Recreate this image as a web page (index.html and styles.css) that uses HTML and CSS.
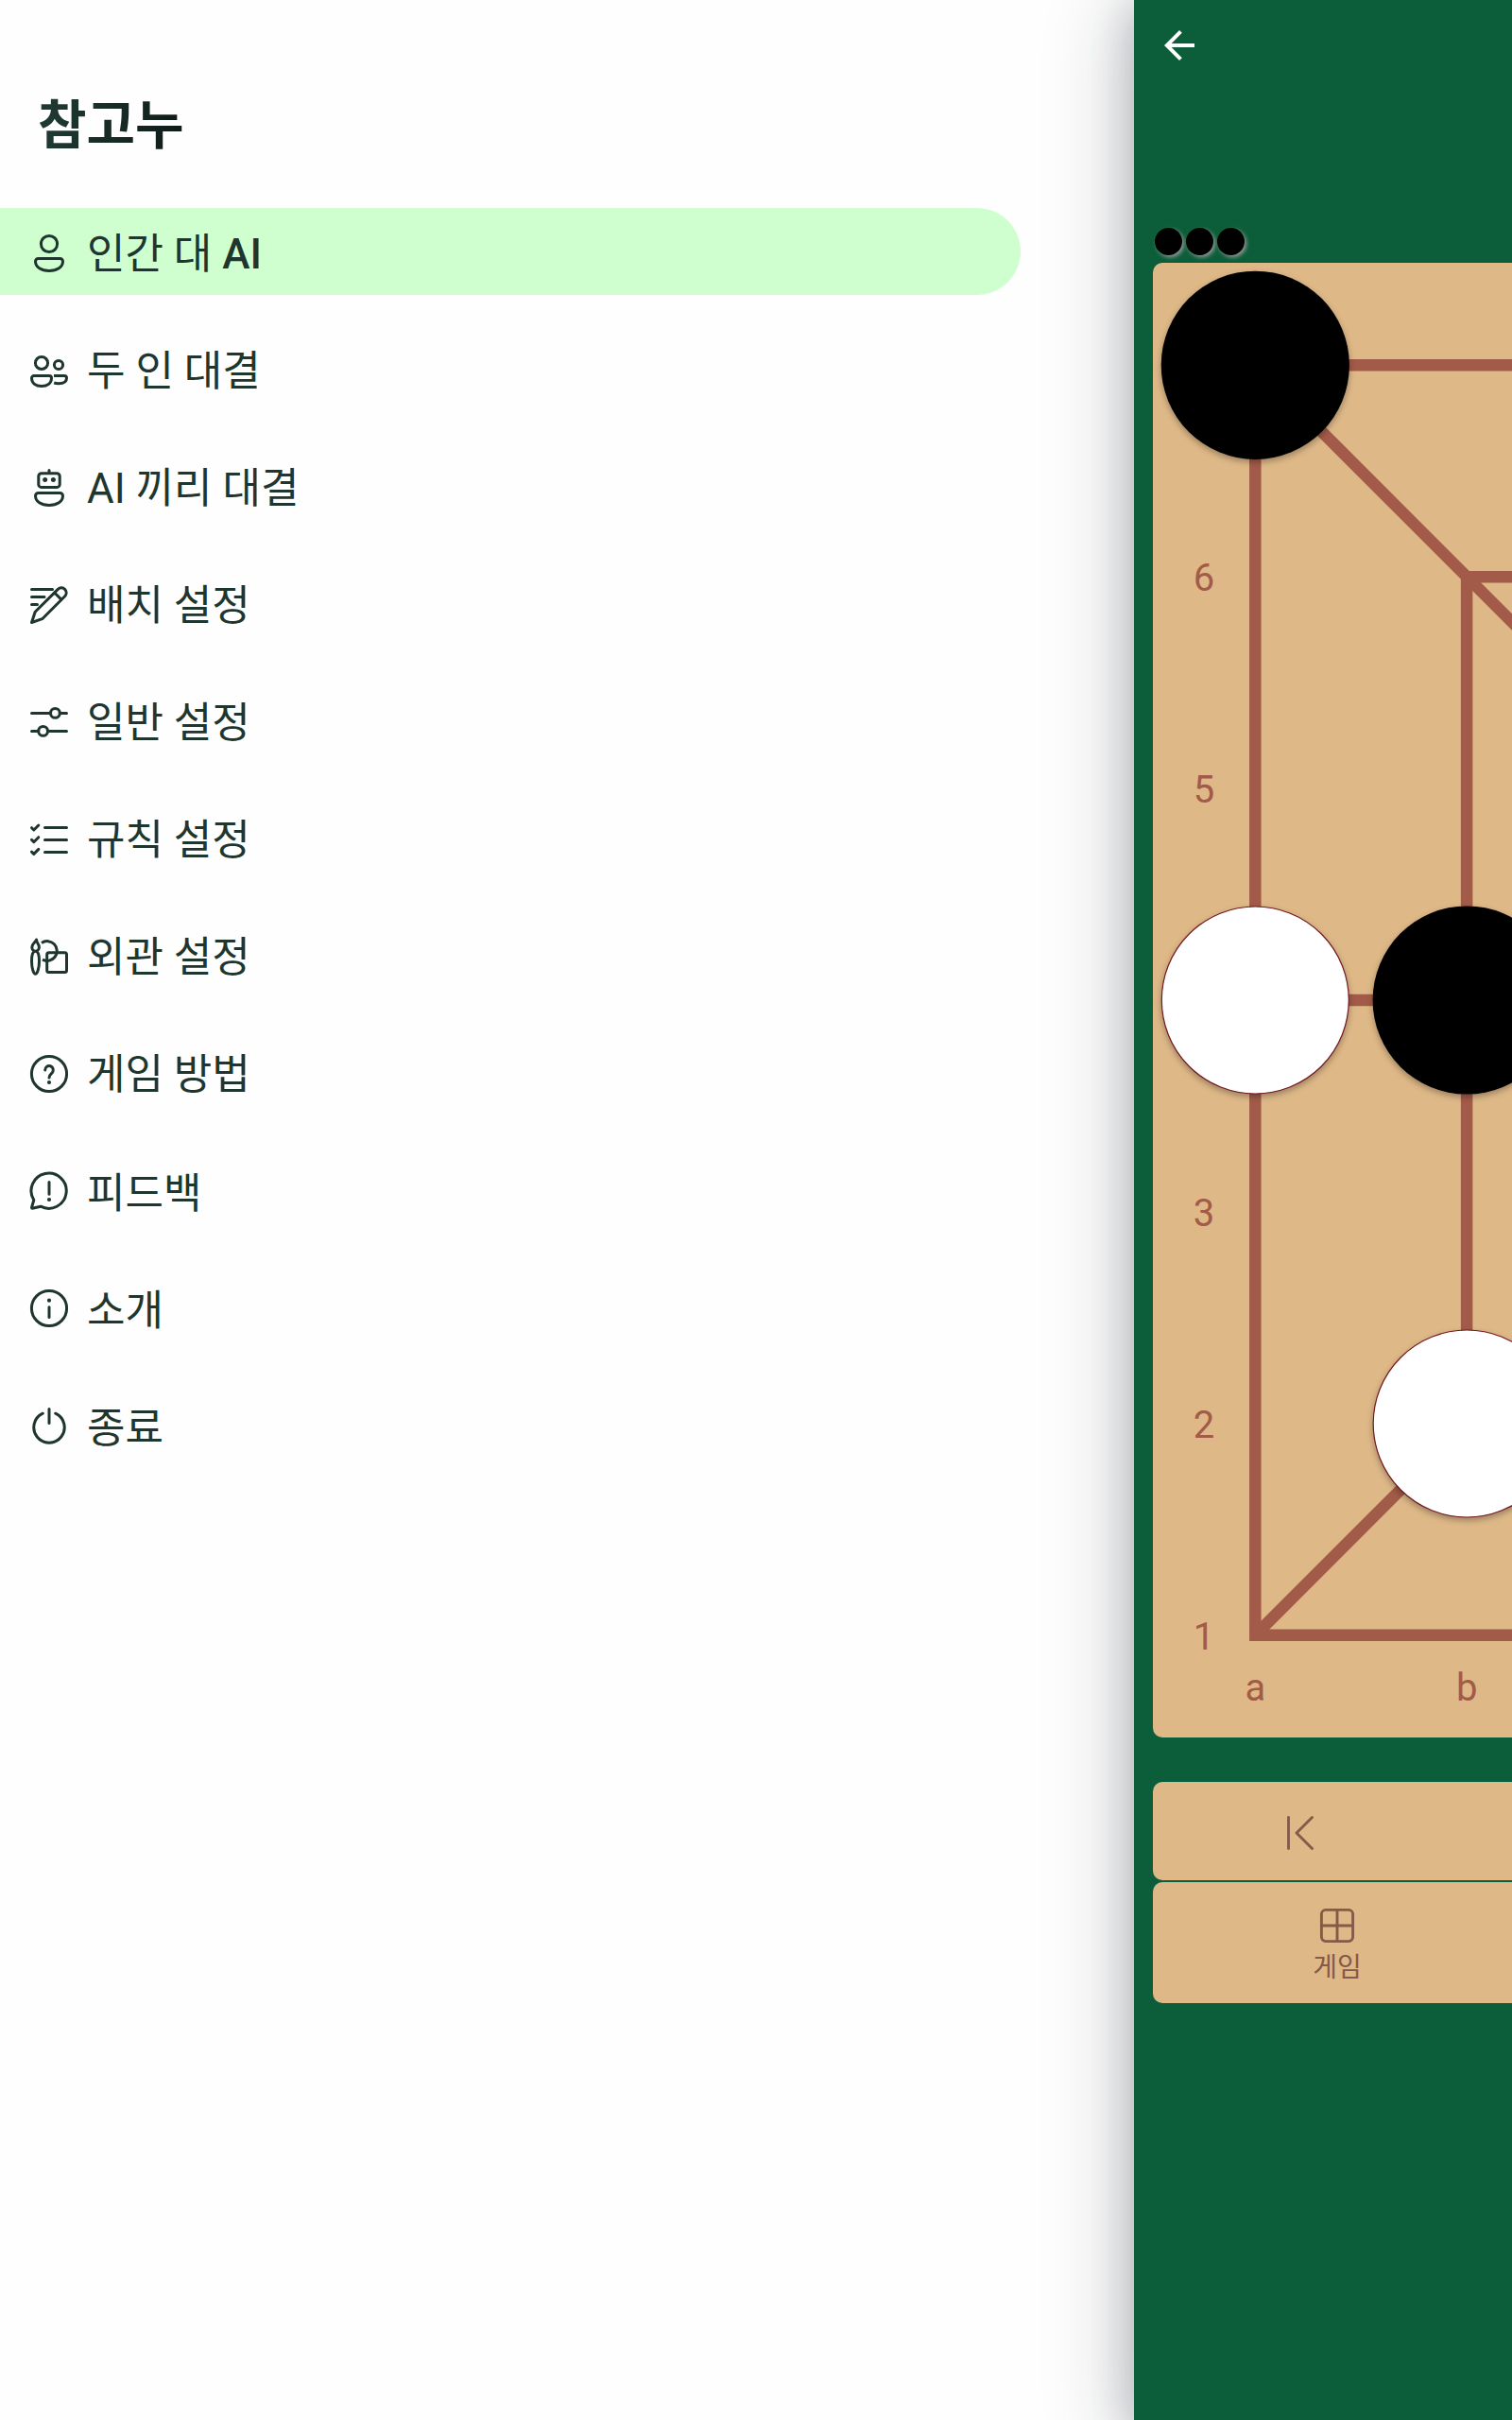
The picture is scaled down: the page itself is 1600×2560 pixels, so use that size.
FILE: index.html
```html
<!DOCTYPE html>
<html lang="ko">
<head>
<meta charset="utf-8">
<title>참고누</title>
<link rel="stylesheet" href="styles.css">
</head>
<body>
<div class="app">
  <nav class="drawer">
    <h1 class="drawer-title"><span class="title-text">참고누</span></h1>
    <ul class="menu">
      <li class="menu-item active">
        <svg class="icon" viewBox="0 0 48 48"><circle cx="24" cy="14" r="8.6"/><path d="M12.5 29.5h23a3 3 0 0 1 3 3c0 6.3-6.2 10-14.5 10s-14.5-3.700-14.500-10a3 3 0 0 1 3-3z"/></svg>
        <span class="label">인간 대 <b class="latin">AI</b></span>
      </li>
      <li class="menu-item">
        <svg class="icon" viewBox="0 0 48 48"><circle cx="16" cy="16" r="6.600"/><circle cx="34" cy="18" r="4.600"/><path d="M8 29.500h16a2.500 2.500 0 0 1 2.500 2.500c0 5.500-4.500 8.500-10.500 8.500s-10.500-3-10.500-8.500a2.500 2.500 0 0 1 2.500-2.500z"/><path class="butt" d="M29 29.500h11a2.500 2.500 0 0 1 2.500 2.500c0 4-3.800 5.700-8.500 5.700q-2.700 0-4.800-.7"/></svg>
        <span class="label">두 인 대결</span>
      </li>
      <li class="menu-item">
        <svg class="icon" viewBox="0 0 48 48"><path d="M24 5.500v3"/><rect x="12.800" y="8.800" width="22.400" height="14.600" rx="3"/><circle class="dot" cx="19.700" cy="15.400" r="2.500"/><circle class="dot" cx="28.400" cy="15.400" r="2.500"/><path d="M12.500 29.500h23a3 3 0 0 1 3 3c0 6.300-6.200 10-14.500 10s-14.500-3.700-14.500-10a3 3 0 0 1 3-3z"/></svg>
        <span class="label">AI 끼리 대결</span>
      </li>
      <li class="menu-item">
        <svg class="icon" viewBox="0 0 48 48"><path d="M5.500 7.400h22M5.500 15.400h13.500M5.500 23.400h6M5.500 42.500 9.200 31.300 33.500 7.100a5.250 5.250 0 0 1 7.400 7.400L16.700 38.700zM29.700 11l7.400 7.400"/></svg>
        <span class="label">배치 설정</span>
      </li>
      <li class="menu-item">
        <svg class="icon" viewBox="0 0 48 48"><circle cx="30.400" cy="14.400" r="4.900"/><circle cx="17.600" cy="33.400" r="4.900"/><path d="M5.500 14.400h20M35.300 14.400h7.200M5.500 33.400h7.200M22.500 33.400h20"/></svg>
        <span class="label">일반 설정</span>
      </li>
      <li class="menu-item">
        <svg class="icon" viewBox="0 0 48 48"><path d="M5.500 11.700 7.800 14l5-5M5.500 24.400l2.300 2.300 5-5M5.500 37.100l2.300 2.300 5-5M19.500 11.400h23M19.500 24.400h23M19.500 37.400h23"/></svg>
        <span class="label">규칙 설정</span>
      </li>
      <li class="menu-item">
        <svg class="icon" viewBox="0 0 48 48"><path d="M10.600 6c-1 2.800-4.800 4.200-4.800 8 0 2.200 1.600 4.200 3.700 4.200s3.900-1.800 3.900-4.200c0-3.600-3-4.500-2.800-8zM9.500 18.200c-2.700 0-4 4-4 10.500 0 7.500 2 13.500 4 13.500s4-6 4-13.500c0-6.500-1.300-10.500-4-10.500z"/><path class="butt" d="M16 9.400a10.400 10.400 0 1 1 1 17.800"/><rect x="21.700" y="19.800" width="20.800" height="20.600" rx="2"/></svg>
        <span class="label">외관 설정</span>
      </li>
      <li class="menu-item">
        <svg class="icon" viewBox="0 0 48 48"><circle cx="24" cy="24" r="18.600"/><path d="M19.700 20a4.300 4.400 0 1 1 7.600 2.700c-1.700 1.700-3.300 2.600-3.300 5.300"/><circle class="dot" cx="24" cy="33" r="2.100"/></svg>
        <span class="label">게임 방법</span>
      </li>
      <li class="menu-item">
        <svg class="icon" viewBox="0 0 48 48"><path d="M7.800 33.500a18.600 18.600 0 1 1 7.200 6.700L6.300 42.300a.8.8 0 0 1-.8-.8zM24 14.500v12.700"/><circle class="dot" cx="24" cy="33" r="2.100"/></svg>
        <span class="label single">피드백</span>
      </li>
      <li class="menu-item">
        <svg class="icon" viewBox="0 0 48 48"><circle cx="24" cy="24" r="18.600"/><path d="M24 22.700v10.700"/><circle class="dot" cx="24" cy="15.700" r="2.100"/></svg>
        <span class="label single">소개</span>
      </li>
      <li class="menu-item">
        <svg class="icon" viewBox="0 0 48 48"><path d="M17.300 11.200a16.200 16.200 0 1 0 13.400 0M24 6.500v15"/></svg>
        <span class="label single">종료</span>
      </li>
    </ul>
  </nav>

  <main class="game">
    <header class="topbar">
      <svg class="back" viewBox="0 0 24 24"><path d="M20 11H7.830l5.590-5.590L12 4l-8 8 8 8 1.410-1.410L7.830 13H20z"/></svg>
    </header>
    <div class="in-hand"><i></i><i></i><i></i></div>
    <svg class="board" viewBox="0 0 380 1560">
      <g class="lines">
        <path d="M400 108.300H108.300V1451.700H400"/>
        <path d="M400 332.200H332.100V1228"/>
        <path d="M108 780H332M108 108 400 400M108 1452 332 1228"/>
      </g>
      <g class="coords">
        <text x="54" y="346.700">6</text>
        <text x="54" y="570.700">5</text>
        <text x="54" y="1018.700">3</text>
        <text x="54" y="1242.700">2</text>
        <text x="54" y="1466.700">1</text>
        <text x="108.300" y="1520.700">a</text>
        <text x="332.300" y="1520.700">b</text>
      </g>
      <g class="pieces">
        <circle class="black" cx="108.300" cy="108.300" r="99.600"/>
        <circle class="white" cx="108.300" cy="780" r="99"/>
        <circle class="black" cx="332.200" cy="780" r="99.600"/>
        <circle class="white" cx="332.200" cy="1228" r="99"/>
      </g>
    </svg>
    <div class="toolbar history">
      <svg class="tool-icon" viewBox="0 0 48 48"><path d="M11.500 7.500v33M36.500 7.500 20 24l16.500 16.500"/></svg>
    </div>
    <div class="toolbar actions">
      <svg class="tool-icon" viewBox="0 0 48 48"><rect x="7.400" y="7.400" width="33.200" height="33.200" rx="4.500"/><path d="M24 7.500v33M7.500 24h33"/></svg>
      <span class="tool-label">게임</span>
    </div>
  </main>
</div>
</body>
</html>
```
FILE: styles.css
```css
* {
  box-sizing: border-box;
}

body {
  margin: 0;
  font-family: Roboto, "Noto Sans CJK KR", sans-serif;
  color: #1e362e;
}

.app {
  display: grid;
  grid-template-columns: 1200px 400px;
  width: 1600px;
  height: 2560px;
  overflow: hidden;
  background: #fefefe;
}

.drawer-title {
  margin: 0;
  height: 220px;
  padding: 91px 0 0 40px;
  font-size: 56px;
  line-height: 84px;
  font-weight: 700;
}

.title-text {
  color: transparent;
  background: linear-gradient(100deg, #1f3932 10%, #0e1a17 100%);
  -webkit-background-clip: text;
  background-clip: text;
}

.menu {
  display: flex;
  flex-direction: column;
  gap: 32px;
  width: 1080px;
  margin: 0;
  padding: 0;
  list-style: none;
}

.menu-item {
  display: flex;
  gap: 16px;
  height: 92px;
  padding-left: 28px;
  border-radius: 0 46px 46px 0;
}

.active {
  background: #d0ffcf;
}

.icon {
  width: 48px;
  height: 48px;
  margin-top: 24px;
  fill: none;
  stroke: #1e362e;
  stroke-width: 3;
  stroke-linecap: round;
  stroke-linejoin: round;
}

.icon .dot {
  fill: #1e362e;
  stroke: none;
}

.icon .butt {
  stroke-linecap: butt;
}

.label {
  font-size: 44px;
  line-height: 98px;
  white-space: nowrap;
}

.single {
  line-height: 102px;
}

.latin {
  font-weight: 500;
}

.game {
  display: flex;
  flex-direction: column;
  padding-left: 20px;
  background: #0b5e39;
  box-shadow: 0 8px 40px 2px rgba(20, 25, 45, 0.2), 0 12px 80px 14px rgba(20, 30, 40, 0.2);
}

.topbar {
  height: 241px;
  padding: 24px 4px;
}

.back {
  display: block;
  width: 48px;
  height: 48px;
  fill: #fff;
}

.in-hand {
  display: flex;
  gap: 4px;
  height: 37px;
  padding-left: 2px;
}

.in-hand i {
  width: 29px;
  height: 29px;
  border-radius: 50%;
  background: #000;
  box-shadow: 2px 2px 4px #999;
}

.board {
  display: block;
  width: 380px;
  height: 1560px;
  border-radius: 10px 0 0 10px;
  background: #deb887;
}

.lines {
  fill: none;
  stroke: #a25b48;
  stroke-width: 12.5;
}

.coords {
  font-size: 40px;
  fill: #a25b48;
  text-anchor: middle;
}

.pieces {
  filter: drop-shadow(0 3px 3px rgba(0, 0, 0, 0.3));
}

.white {
  fill: #fff;
  stroke: #74171f;
  stroke-width: 1.2;
}

.toolbar {
  border-radius: 10px 0 0 10px;
  background: #deb887;
}

.history {
  height: 104px;
  margin-top: 47px;
  padding: 30px 0 0 132px;
}

.actions {
  display: flex;
  flex-direction: column;
  align-items: center;
  width: 390px;
  height: 128px;
  margin-top: 2px;
  padding-top: 22px;
}

.tool-icon {
  display: block;
  width: 48px;
  height: 48px;
  fill: none;
  stroke: #855a48;
  stroke-width: 2.9;
  stroke-linecap: round;
  stroke-linejoin: round;
}

.tool-label {
  font-size: 28px;
  line-height: 42px;
  color: #855a48;
}
```
